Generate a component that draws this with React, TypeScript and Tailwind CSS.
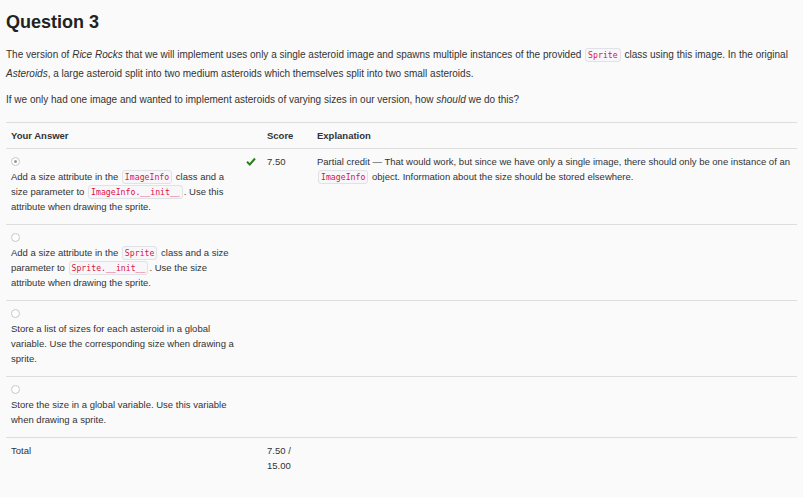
import React from "react";

const font = { fontFamily: '"Liberation Sans", Arial, sans-serif' };

function Code({ children }: { children: React.ReactNode }) {
	return (
		<code className="mx-[1px] rounded-[3px] border border-[#e1e1e8] bg-[#f7f7f9] px-[2px] py-[1px] font-['DejaVu_Sans_Mono',monospace] text-[8.2px] leading-[10px] text-[#dd1144]">
			{children}
		</code>
	);
}

function Radio({ checked }: { checked?: boolean }) {
	return (
		<div className="flex h-[15px] items-center">
			<span className="flex h-[9px] w-[9px] items-center justify-center rounded-full border border-[#c8c8c8] bg-white">
				{checked && <span className="h-[3px] w-[3px] rounded-full bg-[#999]" />}
			</span>
		</div>
	);
}

function Check() {
	return (
		<svg width="10" height="9" viewBox="0 0 10 9" className="mt-[3px]">
			<path d="M1 4.8 L3.8 7.5 L9 1.5" fill="none" stroke="#2f7d1f" strokeWidth="2" />
		</svg>
	);
}

type Row = { text: React.ReactNode; checked?: boolean; score?: string; explanation?: React.ReactNode };

const rows: Row[] = [
	{
		checked: true,
		text: (
			<>
				Add a size attribute in the <Code>ImageInfo</Code> class and a size parameter to{" "}
				<Code>ImageInfo.__init__</Code>. Use this attribute when drawing the sprite.
			</>
		),
		score: "7.50",
		explanation: (
			<>
				Partial credit — That would work, but since we have only a single image, there should only be one
				instance of an <Code>ImageInfo</Code> object. Information about the size should be stored elsewhere.
			</>
		),
	},
	{
		text: (
			<>
				Add a size attribute in the <Code>Sprite</Code> class and a size parameter to{" "}
				<Code>Sprite.__init__</Code>. Use the size attribute when drawing the sprite.
			</>
		),
	},
	{
		text: "Store a list of sizes for each asteroid in a global variable. Use the corresponding size when drawing a sprite.",
	},
	{
		text: "Store the size in a global variable. Use this variable when drawing a sprite.",
	},
];

export default function App() {
	return (
		<div style={font} className="min-h-[497px] w-[803px] bg-[#fafafa] px-[6px] text-[#333]">
			<h2 className="pt-[11px] text-[18px] font-bold leading-[22px] text-[#222]">Question 3</h2>
			<p className="mt-[12px] text-[10px] leading-[19px]">
				The version of <em>Rice Rocks</em> that we will implement uses only a single asteroid image and spawns
				multiple instances of the provided <Code>Sprite</Code> class using this image. In the original{" "}
				<em>Asteroids</em>, a large asteroid split into two medium asteroids which themselves split into two small
				asteroids.
			</p>
			<p className="mt-[7px] text-[10px] leading-[19px]">
				If we only had one image and wanted to implement asteroids of varying sizes in our version, how{" "}
				<em>should</em> we do this?
			</p>

			<div className="mt-[13px] grid grid-cols-[240px_16px_50px_1fr] text-[9.5px] leading-[15px]">
				<div className="col-span-4 grid grid-cols-subgrid border-y border-[#ddd] font-bold">
					<div className="px-[5px] py-[5px]">Your Answer</div>
					<div />
					<div className="px-[5px] py-[5px]">Score</div>
					<div className="px-[5px] py-[5px]">Explanation</div>
				</div>
				{rows.map((row, i) => (
					<div key={i} className="col-span-4 grid grid-cols-subgrid border-b border-[#ddd]">
						<div className="px-[5px] pt-[5px] pb-[10px]">
							<Radio checked={row.checked} />
							<div className="pr-[3px]">{row.text}</div>
						</div>
						<div className="pt-[5px]">{row.score && <Check />}</div>
						<div className="px-[5px] pt-[5px]">{row.score}</div>
						<div className="px-[5px] pt-[5px]">{row.explanation}</div>
					</div>
				))}
				<div className="col-span-4 grid grid-cols-subgrid">
					<div className="px-[5px] pt-[5px]">Total</div>
					<div />
					<div className="px-[5px] pt-[5px]">7.50 / 15.00</div>
					<div />
				</div>
			</div>
		</div>
	);
}
